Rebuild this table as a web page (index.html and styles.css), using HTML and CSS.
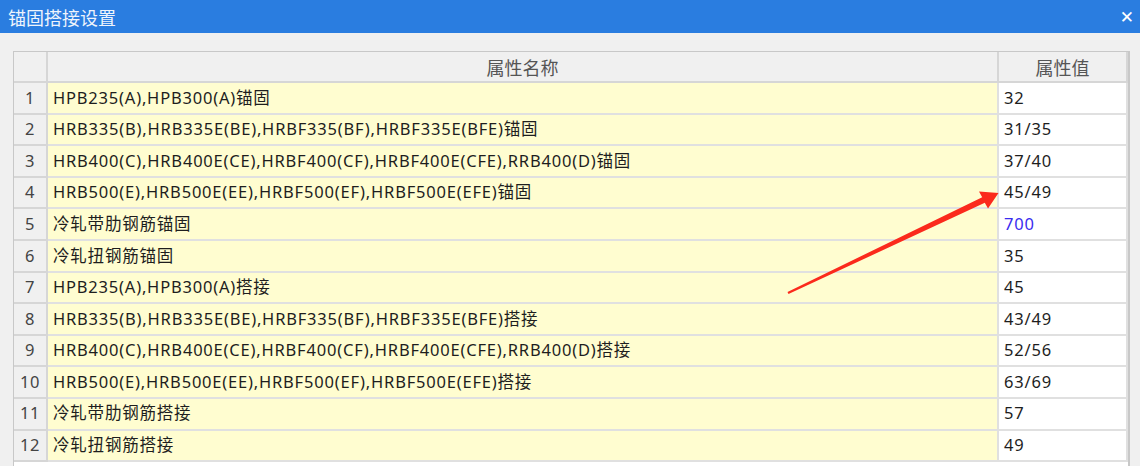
FILE: index.html
```html
<!DOCTYPE html>
<html lang="zh-CN">
<head>
  <meta charset="UTF-8">
  <meta name="viewport" content="width=device-width, initial-scale=1.0">
  <title>锚固搭接设置</title>
  <link rel="stylesheet" href="styles.css">
</head>
<body>

  <div class="dialog">
    <div class="titlebar">
      <span class="title">锚固搭接设置</span>
      <span class="close">✕</span>
    </div>

    <div class="content">
      <div class="grid-box">
        <table class="prop-grid">
          <colgroup>
            <col class="col-no">
            <col class="col-name">
            <col class="col-value">
          </colgroup>
          <thead>
            <tr>
              <th></th>
              <th>属性名称</th>
              <th>属性值</th>
            </tr>
          </thead>
          <tbody>
            <tr><td class="no">1</td><td class="name">HPB235(A),HPB300(A)锚固</td><td class="value">32</td></tr>
            <tr><td class="no">2</td><td class="name">HRB335(B),HRB335E(BE),HRBF335(BF),HRBF335E(BFE)锚固</td><td class="value">31/35</td></tr>
            <tr><td class="no">3</td><td class="name">HRB400(C),HRB400E(CE),HRBF400(CF),HRBF400E(CFE),RRB400(D)锚固</td><td class="value">37/40</td></tr>
            <tr><td class="no">4</td><td class="name">HRB500(E),HRB500E(EE),HRBF500(EF),HRBF500E(EFE)锚固</td><td class="value">45/49</td></tr>
            <tr><td class="no">5</td><td class="name">冷轧带肋钢筋锚固</td><td class="value changed">700</td></tr>
            <tr><td class="no">6</td><td class="name">冷轧扭钢筋锚固</td><td class="value">35</td></tr>
            <tr><td class="no">7</td><td class="name">HPB235(A),HPB300(A)搭接</td><td class="value">45</td></tr>
            <tr><td class="no">8</td><td class="name">HRB335(B),HRB335E(BE),HRBF335(BF),HRBF335E(BFE)搭接</td><td class="value">43/49</td></tr>
            <tr><td class="no">9</td><td class="name">HRB400(C),HRB400E(CE),HRBF400(CF),HRBF400E(CFE),RRB400(D)搭接</td><td class="value">52/56</td></tr>
            <tr><td class="no">10</td><td class="name">HRB500(E),HRB500E(EE),HRBF500(EF),HRBF500E(EFE)搭接</td><td class="value">63/69</td></tr>
            <tr><td class="no">11</td><td class="name">冷轧带肋钢筋搭接</td><td class="value">57</td></tr>
            <tr><td class="no">12</td><td class="name">冷轧扭钢筋搭接</td><td class="value">49</td></tr>
          </tbody>
        </table>
      </div>
    </div>

    <!-- red annotation arrow drawn over the grid -->
    <svg class="arrow" width="1140" height="466" viewBox="0 0 1140 466">
      <polygon points="787.5,291.9 982.2,197.3 979,191.5 998.5,193 988,208.5 984.8,202.7 788.5,294.1" fill="#fb2a1c"/>
    </svg>
  </div>

</body>
</html>
```

FILE: styles.css
```css
body {
  margin: 0;
  padding: 0;
  background-color: #f0f0f0;
  font-family: "Noto Sans", "Noto Sans CJK SC", sans-serif;
  overflow: hidden;
}

.dialog {
  position: relative;
  width: 1140px;
  height: 466px;
  overflow: hidden;
}

.titlebar {
  height: 33px;
  background-color: #2a7de0;
  color: #ffffff;
  display: flex;
  align-items: center;
  justify-content: space-between;
  padding: 0 6px 0 8px;
}

.title {
  font-size: 18px;
  opacity: 0.92;
}

.close {
  font-size: 17px;
  font-family: "DejaVu Sans", sans-serif;
}

.content {
  padding: 18px 10px 0 13px;
}

.grid-box {
  width: 1117px;
  height: 430px;
  background-color: #ffffff;
  border-left: 1px solid #c8c8c8;
  border-top: 1px solid #c8c8c8;
  border-right: 2px solid #c8c8c8;
  box-sizing: border-box;
}

.prop-grid {
  width: 100%;
  border-collapse: collapse;
  table-layout: fixed;
  font-size: 16.5px;
  color: #1e1e1e;
}

.col-no {
  width: 33px;
}

.col-value {
  width: 129px;
}

.prop-grid th {
  height: 29px;
  background-color: #f0f0f0;
  color: #555555;
  font-size: 18px;
  font-weight: normal;
  text-align: center;
  border: 2px solid #d6d6d6;
  border-top: none;
  padding: 0;
}

.prop-grid th:first-child {
  border-left: none;
}

.prop-grid td {
  height: 29.6px;
  padding: 0 5px;
  border: 2px solid #e0e0e0;
  white-space: nowrap;
  line-height: 1;
  letter-spacing: 0.8px;
}

.prop-grid td.no {
  background-color: #f0f0f0;
  color: #444444;
  text-align: center;
  padding: 0;
  letter-spacing: 0.5px;
  border-left: none;
  border-color: #d6d6d6;
}

.prop-grid td.name {
  background-color: #fffdd0;
}

.prop-grid td.value {
  background-color: #ffffff;
}

.prop-grid td.changed {
  color: #3a2cf0;
}

.arrow {
  position: absolute;
  left: 0;
  top: 0;
  pointer-events: none;
}
```
